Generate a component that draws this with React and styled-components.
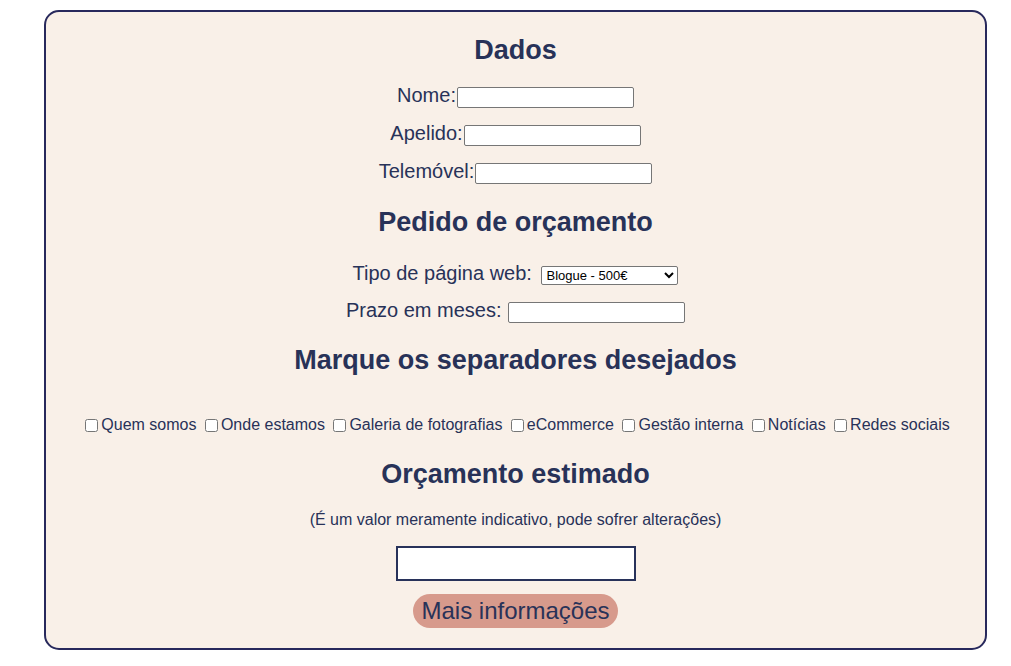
import React from 'react';
import styled, { createGlobalStyle } from 'styled-components';

const GlobalStyle = createGlobalStyle`
    body{
        margin: 0;
        background: #ffffff;
        font-family: "Liberation Sans", Arial, sans-serif;
    }
`

const separadores = [
    'Quem somos',
    'Onde estamos',
    'Galeria de fotografias',
    'eCommerce',
    'Gestão interna',
    'Notícias',
    'Redes sociais'
]

export default function App() {
    return (
        <>
            <GlobalStyle />
            <Card>
                <Title top={22}>Dados</Title>
                <Row top={18}>Nome:<TextField /></Row>
                <Row top={14}>Apelido:<TextField /></Row>
                <Row top={14}>Telemóvel:<TextField /></Row>

                <Title top={22}>Pedido de orçamento</Title>
                <Row top={24}>
                    Tipo de página web:&nbsp;
                    <Select defaultValue="blogue">
                        <option value="blogue">Blogue - 500€</option>
                        <option value="loja">Loja online - 1000€</option>
                        <option value="corp">Corporativa - 800€</option>
                    </Select>
                </Row>
                <Row top={14}>Prazo em meses:&nbsp;<TextField /></Row>

                <Title top={21}>Marque os separadores desejados</Title>
                <Checks>
                    {separadores.map(item => {
                        return (
                            <span key={item}>
                                <input type="checkbox" />{item}{' '}
                            </span>
                        )
                    })}
                </Checks>

                <Title top={23}>Orçamento estimado</Title>
                <Note>(É um valor meramente indicativo, pode sofrer alterações)</Note>
                <Total type="text" readOnly />
                <MoreButton>Mais informações</MoreButton>
            </Card>
        </>
    )
}

const Card = styled.div`
    margin: 10px 24px 0 44px;
    height: 640px;
    box-sizing: border-box;
    border: 2px solid #28295c;
    border-radius: 15px;
    background: #f9f0e8;
    color: #283258;
    display: flex;
    flex-direction: column;
    align-items: center;
`

const Title = styled.h2`
    margin: ${p => p.top}px 0 0 0;
    font-size: 27px;
    line-height: 32px;
    font-weight: bold;
`

const Row = styled.div`
    margin-top: ${p => p.top}px;
    display: flex;
    align-items: baseline;
    justify-content: center;
    font-size: 20px;
    line-height: 23px;
`

const TextField = styled.input.attrs({ type: 'text' })`
    width: 177px;
    height: 21px;
    box-sizing: border-box;
    margin: 0 0 0 1px;
    border: 1px solid #767676;
    border-radius: 2px;
    font-family: "Liberation Sans", Arial, sans-serif;
    font-size: 13px;
    background: #ffffff;
`

const Select = styled.select`
    width: 137px;
    height: 19px;
    box-sizing: border-box;
    margin: 0 0 0 4px;
    border: 1px solid #767676;
    border-radius: 2px;
    font-family: "Liberation Sans", Arial, sans-serif;
    font-size: 13px;
    color: #000000;
    background: #ffffff;
`

const Checks = styled.div`
    margin-top: 40px;
    font-size: 16px;
    line-height: 18px;
    text-align: center;
    white-space: nowrap;

    input{
        margin: 3px 3px 3px 4px;
        vertical-align: -2px;
    }
`

const Note = styled.p`
    margin: 21px 0 0 0;
    font-size: 16px;
    line-height: 18px;
`

const Total = styled.input`
    margin-top: 17px;
    width: 240px;
    height: 35px;
    box-sizing: border-box;
    border: 2px solid #28325a;
    border-radius: 0;
    background: #ffffff;
`

const MoreButton = styled.button`
    margin-top: 13px;
    width: 205px;
    height: 34px;
    padding: 0;
    border: none;
    border-radius: 17px;
    background: #d79a8c;
    color: #283258;
    font-family: "Liberation Sans", Arial, sans-serif;
    font-size: 24px;
`
